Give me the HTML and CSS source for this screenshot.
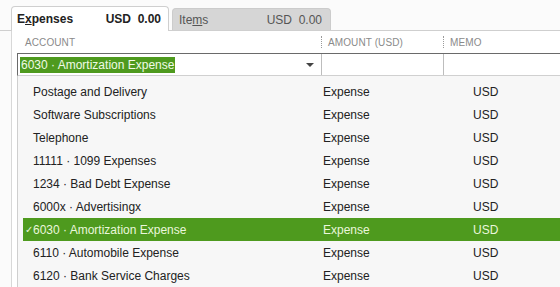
FILE: index.html
```html
<!DOCTYPE html>
<html>
<head>
<meta charset="utf-8">
<link rel="stylesheet" href="styles.css">
</head>
<body>
<div class="page">
  <div class="tabs">
    <div class="tab tab-active">
      <span class="tab-name">E<u>x</u>penses</span>
      <span class="tab-amt">USD&nbsp; 0.00</span>
    </div>
    <div class="tab tab-idle">
      <span class="tab-name">Ite<u>m</u>s</span>
      <span class="tab-amt">USD&nbsp; 0.00</span>
    </div>
  </div>
  <div class="panel">
    <div class="head">
      <div class="hcell hc-account">ACCOUNT</div>
      <div class="hcell hc-amount"><span class="dots"></span>AMOUNT (USD)</div>
      <div class="hcell hc-memo"><span class="dots"></span>MEMO</div>
    </div>
    <div class="edit-row">
      <div class="ecell ec-account">
        <span class="sel-text">6030 · Amortization Expense</span>
        <svg class="arrow" width="8" height="5" viewBox="0 0 8 5"><path d="M0 0H8L4 4Z" fill="#444"/></svg>
      </div>
      <div class="ecell ec-amount"></div>
      <div class="ecell ec-memo"></div>
    </div>
    <div class="menu">
      <div class="item"><span class="chk"></span><span class="c1">Postage and Delivery</span><span class="c2">Expense</span><span class="c3">USD</span></div>
      <div class="item"><span class="chk"></span><span class="c1">Software Subscriptions</span><span class="c2">Expense</span><span class="c3">USD</span></div>
      <div class="item"><span class="chk"></span><span class="c1">Telephone</span><span class="c2">Expense</span><span class="c3">USD</span></div>
      <div class="item"><span class="chk"></span><span class="c1">11111 · 1099 Expenses</span><span class="c2">Expense</span><span class="c3">USD</span></div>
      <div class="item"><span class="chk"></span><span class="c1">1234 · Bad Debt Expense</span><span class="c2">Expense</span><span class="c3">USD</span></div>
      <div class="item"><span class="chk"></span><span class="c1">6000x · Advertisingx</span><span class="c2">Expense</span><span class="c3">USD</span></div>
      <div class="item item-on"><span class="chk">✓</span><span class="c1">6030 · Amortization Expense</span><span class="c2">Expense</span><span class="c3">USD</span></div>
      <div class="item"><span class="chk"></span><span class="c1">6110 · Automobile Expense</span><span class="c2">Expense</span><span class="c3">USD</span></div>
      <div class="item"><span class="chk"></span><span class="c1">6120 · Bank Service Charges</span><span class="c2">Expense</span><span class="c3">USD</span></div>
    </div>
  </div>
</div>
</body>
</html>
```
FILE: styles.css
```css
* { box-sizing: border-box; }
html, body { margin: 0; padding: 0; }
body {
  width: 560px;
  height: 287px;
  overflow: hidden;
  background: #fbfbfb;
  font-family: "Liberation Sans", Arial, sans-serif;
  font-size: 12px;
  color: #222;
}
.page { padding-top: 6px; }
.tabs {
  display: flex;
  align-items: flex-end;
  padding-left: 11px;
  height: 25px;
  border-bottom: 1px solid #cfcfcf;
}
.tab {
  display: flex;
  justify-content: space-between;
  align-items: center;
  border-radius: 4px 4px 0 0;
  font-size: 12px;
}
.tab u { text-decoration: underline; }
.tab-active {
  width: 158px;
  height: 25px;
  margin-bottom: -1px;
  padding: 0 7px 0 5px;
  background: #fff;
  border: 1px solid #cfcfcf;
  border-bottom: none;
  font-weight: bold;
  color: #222;
}
.tab-idle {
  width: 159px;
  height: 22px;
  margin-left: 3px;
  padding: 0 8px 0 6px;
  background: #d6d6d6;
  border: 1px solid #cccccc;
  border-bottom: none;
  color: #555;
}
.panel {
  margin-left: 11px;
  border-left: 1px solid #d8d8d8;
  background: #fff;
  height: 256px;
}
.head {
  display: flex;
  height: 22px;
  align-items: center;
  padding-left: 5px;
  font-size: 10px;
  color: #8a8a8a;
  letter-spacing: 0.1px;
}
.hcell { display: flex; align-items: center; }
.hc-account { width: 304px; padding-left: 8px; }
.hc-amount { width: 122px; }
.hc-memo { flex: 1; }
.dots {
  width: 0;
  height: 12px;
  border-left: 1px dotted #9a9a9a;
  margin-right: 6px;
}
.edit-row {
  display: flex;
  margin-left: 5px;
  height: 23px;
  border-top: 1px solid #6a6a6a;
  border-left: 1px solid #6a6a6a;
  border-bottom: 1px solid #d0d0d0;
}
.ecell { height: 100%; }
.ec-account {
  width: 304px;
  display: flex;
  align-items: center;
  justify-content: space-between;
  padding-left: 2px;
  padding-right: 7px;
  border-right: 1px solid #bdbdbd;
}
.sel-text {
  background: #4e9a1e;
  color: #f0fae6;
  font-size: 12px;
  line-height: 16px;
  padding: 0 1px 0 1px;
}
.arrow { display: block; margin-top: 1px; }
.ec-amount { width: 122px; border-right: 1px solid #bdbdbd; }
.ec-memo { flex: 1; }
.menu {
  margin-left: 5px;
  border-left: 1px solid #cfcfcf;
  background: #f7f7f7;
  padding: 4px 0 0 5px;
  height: 212px;
}
.item {
  display: flex;
  align-items: center;
  height: 23px;
  font-size: 12px;
  color: #222;
}
.item-on { background: #4e9a1e; color: #eaf7dc; }
.chk { width: 10px; font-size: 10px; padding-left: 2px; }
.c1 { width: 290px; }
.c2 { width: 150px; }
.c3 { flex: 1; }
```
